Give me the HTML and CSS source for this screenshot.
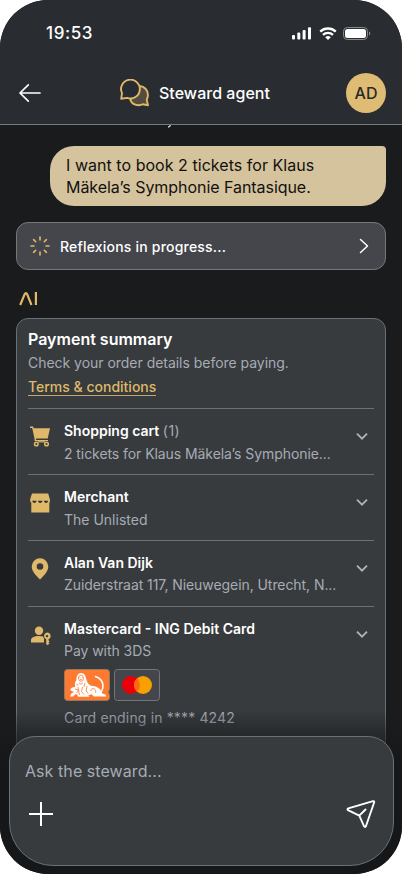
FILE: index.html
```html
<!DOCTYPE html>
<html lang="en">
<head>
<meta charset="utf-8">
<meta name="viewport" content="width=device-width, initial-scale=1">
<title>Steward agent</title>
<link rel="stylesheet" href="styles.css">
</head>
<body>
<div class="phone">
  <header class="top">
    <div class="status">
      <span class="time">19:53</span>
      <div class="signals">
        <svg width="20" height="13" viewBox="0 0 20 13" fill="#fff"><rect x="0" y="8" width="3" height="4.5" rx="1"/><rect x="5.3" y="5.6" width="3" height="6.900" rx="1"/><rect x="10.600" y="3" width="3" height="9.500" rx="1"/><rect x="16" y=".3" width="3" height="12.200" rx="1"/></svg>
        <svg class="wifi" width="18" height="13" viewBox="0 0 18 13"><g fill="none" stroke="#fff" stroke-width="2.300"><path d="M1.200 4.600a11.300 11.300 0 0 1 15.600 0"/><path d="M4 7.800a7.300 7.300 0 0 1 10 0"/></g><path d="M6.200 10.200a4.200 4.200 0 0 1 5.600 0L9 13z" fill="#fff"/></svg>
        <svg class="battery" width="28" height="13" viewBox="0 0 28 13"><rect x=".5" y=".5" width="24" height="12" rx="3.800" fill="none" stroke="#888b8e"/><rect x="2" y="2" width="21" height="9" rx="2.500" fill="#fff"/><path d="M26 4.500c1.800.7 1.800 3.300 0 4z" fill="#888b8e"/></svg>
      </div>
    </div>
    <div class="nav">
      <svg class="back" width="24" height="24" viewBox="0 0 24 24" fill="none" stroke="#fff" stroke-width="1.700" stroke-linecap="round" stroke-linejoin="round"><path d="M22 12H2M10.300 3.800 2 12l8.300 8.200"/></svg>
      <div class="heading">
        <svg width="30" height="28" viewBox="0 0 30 28" stroke="#dfb969" stroke-width="1.900" stroke-linejoin="round"><path d="M19 7c5 .1 8.900 3.700 8.900 8.900 0 1.900-.5 3.400-1.200 4.700l1.300 5.600-5.200-.9c-1 .6-2.400.9-4 .9-4 0-7.200-2-8.500-5.300z" fill="#534d3f"/><path d="M1.200 19.800 2 14.200a9.400 9.400 0 1 1 5.200 4.700z" fill="#292c31"/></svg>
        <h1>Steward agent</h1>
      </div>
      <div class="avatar">AD</div>
    </div>
  </header>

  <main class="chat">
    <div class="earlier"><svg width="5" height="3" viewBox="0 0 5 3"><path d="M3.500 0Q3 2 1 2" fill="none" stroke="#d5d6d7" stroke-width="1.300"/></svg></div>
    <div class="bubble"><span class="l1">I want to book 2 tickets for Klaus</span><br><span class="l2">Mäkela’s Symphonie Fantasique.</span></div>
    <div class="progress">
      <svg width="20" height="20" viewBox="0 0 20 20" stroke="#dfb969" stroke-width="1.600" stroke-linecap="round"><path d="M10 1v3M10 16v3M1 10h3M16 10h3M3.600 3.600l2.100 2.100M14.300 14.300l2.100 2.100M16.400 3.600l-2.100 2.100M5.700 14.300l-2.100 2.100"/></svg>
      <span>Reflexions in progress...</span>
      <svg class="next" width="10" height="16" viewBox="0 0 10 16" fill="none" stroke="#fff" stroke-width="1.500" stroke-linecap="round" stroke-linejoin="round"><path d="m1.500 1.500 7 6.500-7 6.500"/></svg>
    </div>
    <svg class="mark" width="20" height="14" viewBox="0 0 20 14" fill="none" stroke="#dfb969" stroke-width="2.200" stroke-linejoin="round"><path d="M1.200 13 5.600 2.300Q6.900-.1 8.200 2.300L12.500 13M16.900 0v13"/></svg>
    <section class="card">
      <h2>Payment summary</h2>
      <p class="hint">Check your order details before paying.</p>
      <p class="terms"><a>Terms &amp; conditions</a></p>

      <div class="row">
        <svg class="icon cart" width="24" height="24" viewBox="0 0 24 24" fill="#dfb969"><path d="M2 2.600h3.100l.7 1.700H22l-2.300 10.200H8.300L7.900 16H20v1H6.600V15L4.200 4H2z"/><g fill="none" stroke="#dfb969" stroke-width="1.500"><circle cx="8.300" cy="20" r="1.800"/><circle cx="18.500" cy="20" r="1.800"/></g><path d="M10 17.200h7v1.200h-7z"/></svg>
        <div class="info"><h3>Shopping cart <span>(1)</span></h3><p class="s1">2 tickets for Klaus Mäkela’s Symphonie...</p></div>
        <svg class="chev" width="14" height="9" viewBox="0 0 14 9"><path d="m2 1.700 5 5 5-5"/></svg>
      </div>
      <div class="row">
        <svg class="icon" width="24" height="24" viewBox="0 0 24 24" fill="#dfb969"><path d="M4 2.500h16.200l1.500 5.200q.9 2.700-.4 4V21.500H3.300v-9.700q-1.700-1.500-.9-4.300z"/><path d="M4 9.800h4.600l-.5 1.200q-.6 1-1.700 1T4.700 11zM9.900 9.800h4.600L14 11q-.6 1-1.800 1t-1.800-1zM15.800 9.800h4.600l-.7 1.200q-.6 1-1.700 1t-1.700-1z" fill="#33383a"/></svg>
        <div class="info"><h3>Merchant</h3><p class="s2">The Unlisted</p></div>
        <svg class="chev" width="14" height="9" viewBox="0 0 14 9"><path d="m2 1.700 5 5 5-5"/></svg>
      </div>
      <div class="row">
        <svg class="icon" width="24" height="24" viewBox="0 0 24 24"><path fill="#dfb969" fill-rule="evenodd" d="M12 1.200a8.300 8.300 0 0 0-8.300 8.300c0 5.400 5 9.500 8.300 13 3.300-3.500 8.300-7.600 8.300-13A8.300 8.300 0 0 0 12 1.200zm0 5a3.300 3.300 0 1 1 0 6.600 3.300 3.300 0 0 1 0-6.600z"/></svg>
        <div class="info"><h3>Alan Van Dijk</h3><p class="s3">Zuiderstraat 117, Nieuwegein, Utrecht, N...</p></div>
        <svg class="chev" width="14" height="9" viewBox="0 0 14 9"><path d="m2 1.700 5 5 5-5"/></svg>
      </div>
      <div class="row last">
        <svg class="icon" width="24" height="24" viewBox="0 0 24 24" fill="#dfb969"><circle cx="11" cy="7.700" r="4.200"/><path d="M3 19.500v-2.700c0-2.400 4-3.800 8-3.800 1.500 0 3 .2 4.200.6l.8 2.200v3.700z"/><path fill-rule="evenodd" d="M19 9.500a3.500 3.500 0 0 1 1.500 6.700v1l1 1-1 1.200 1 1.200-2 1.700-1.300-1.400v-4.700A3.500 3.500 0 0 1 19 9.500zm0 2.400a1.200 1.200 0 1 0 0 2.400 1.200 1.200 0 0 0 0-2.400z"/></svg>
        <div class="info">
          <h3>Mastercard - ING Debit Card</h3><p class="s4">Pay with 3DS</p>
          <div class="brands">
            <svg width="46" height="32" viewBox="0 0 46 32"><rect x=".5" y=".5" width="45" height="31" rx="3" fill="#ff7a31" stroke="#95785f"/><g fill="#fff"><path d="M12.500 8.500q1-4.600 4.700-4.600 4.200.2 4.700 5.200l1.800 5 2.600 2.500 5.200.8q5.600 2.200 6.800 7l3.200 1.200.8 2H30l-2.500-2.300-3.200 1 1 1.500H14l-1-2.600-2 .3-2 2H6l1.500-3.300 2.500-1-2.300-1.200-1.600-1 1.500-2.200 3.600-1-.4-3.500 1.500-3z"/></g><path d="M31.500 7.500q6.700 2.300 7.400 8.200.3 5.800-3.400 9" fill="none" stroke="#fff" stroke-width="1.500" stroke-linecap="round"/><path d="M14.400 9q.3-2.800 2.600-2.900 2.400.1 2.500 3.100-.3 3.200-2.500 3.200-2.300-.2-2.600-3.400M12.300 15l2.200 1.200M15 14l2 1.300 2-1.500M18.500 18l-1 4.500 2.500 3M23 17l-.8 5 2 2.500M26.500 22q.8-3 3.500-2.500 2.600 1 1.700 4.500M11 20l3.500 1-2 3M14 18l1.500 8M21 14l-1.200 4" fill="none" stroke="#ff7a31" stroke-width=".8"/><path d="M15.700 8.700h.8M17.700 8.700h.8M16 10.700h2" stroke="#ff7a31" stroke-width=".8"/><path d="M46 20q-3 3-.2 6z" fill="#505356"/></svg>
            <svg width="46" height="32" viewBox="0 0 46 32"><rect x=".5" y=".5" width="45" height="31" rx="3" fill="#45464c" stroke="#73777b"/><circle cx="17" cy="16" r="9" fill="#eb0009"/><circle cx="29" cy="16" r="9" fill="#f8a000"/><path d="M23 9.300a9 9 0 0 1 0 13.400 9 9 0 0 1 0-13.400z" fill="#ff6812"/></svg>
          </div>
          <p class="s5">Card ending in **** 4242</p>
        </div>
        <svg class="chev" width="14" height="9" viewBox="0 0 14 9"><path d="m2 1.700 5 5 5-5"/></svg>
      </div>
    </section>
  </main>

  <div class="dock">
    <div class="composer">
      <div class="ask">Ask the steward...</div>
      <div class="actions">
        <svg width="24" height="24" viewBox="0 0 24 24" stroke="#fff" stroke-width="2"><path d="M0 12h24M12 0v24"/></svg>
        <svg width="30" height="30" viewBox="0 0 30 30" fill="none" stroke="#fff" stroke-width="1.900" stroke-linecap="round" stroke-linejoin="round"><path d="M27 2.200 2.300 9.400q-1.500.8-.3 1.800l11.300 5.500L18 27.200q1.200 1.600 2-.2L28.200 3.200q.1-1.300-1.200-1zM13.300 16.700l6.200-6.200"/></svg>
      </div>
    </div>
  </div>
</div>
</body>
</html>
```
FILE: styles.css
```css
* { box-sizing: border-box; }
body { margin: 0; background: #fff; font-family: Inter, "Liberation Sans", sans-serif; color: #fff; }
h1, h2, h3, p { margin: 0; white-space: nowrap; }
svg { display: block; flex: none; }

.phone { position: relative; width: 402px; height: 874px; border-radius: 48px; overflow: hidden; display: flex; flex-direction: column; background: #191b1c; }

.top { height: 125px; flex: none; background: #292c31; border-bottom: 1px solid #75797c; display: flex; flex-direction: column; }
.status { height: 66px; padding: 0 31px 0 46px; display: flex; align-items: center; justify-content: space-between; }
.time { font-size: 17px; font-weight: 500; line-height: 22px; letter-spacing: .6px; }
.signals { display: flex; align-items: center; }
.wifi { margin-left: 7px; }
.battery { margin-left: 6px; }
.nav { height: 54px; padding: 0 16px 0 18px; display: flex; align-items: center; }
.heading { display: flex; align-items: center; gap: 9px; margin: 0 auto 0 78px; }
h1 { font-size: 16px; font-weight: 500; line-height: 24px; letter-spacing: .03px; }
.avatar { width: 40px; height: 40px; border-radius: 50%; background: #dfbc74; color: #292a27; display: flex; align-items: center; justify-content: center; font-size: 16px; font-weight: 500; }

.chat { flex: 1; min-height: 0; overflow: hidden; padding: 0 16px; display: flex; flex-direction: column; }
.earlier { height: 3px; margin: 0 0 18px 151px; flex: none; }
.bubble { flex: none; margin-left: 34px; height: 60px; padding: 8px 16px; border-radius: 24px 4px 24px 24px; background: #d5c39d; color: #11110f; font-size: 16px; line-height: 22px; white-space: nowrap; }
.l1 { letter-spacing: .04px; }
.l2 { letter-spacing: -.05px; }
.progress { flex: none; height: 48px; margin-top: 16px; padding: 0 16px 0 13px; display: flex; align-items: center; gap: 10px; border: 1px solid #75777b; border-radius: 12px; background: #45464c; font-size: 14px; font-weight: 500; letter-spacing: .2px; }
.next { margin-left: auto; }
.mark { margin: 22px 0 12px 3px; }

.card { flex: none; height: 440px; padding: 8px 11px; border: 1px solid #68717a; border-radius: 12px; background: #373b3e; }
h2 { font-size: 16px; font-weight: 600; line-height: 24px; }
.hint, .terms { font-size: 14px; line-height: 24px; color: #a7abb4; }
.hint { letter-spacing: -.03px; }
.terms { margin-bottom: 9px; }
.terms a { color: #dfb969; font-weight: 500; border-bottom: 1px solid #c5a765; }
.row { height: 66px; border-top: 1px solid #68717a; padding: 11px 5px 0 0; display: flex; align-items: flex-start; }
.row.last { height: auto; }
.icon { margin: 5px 12px 0 0; }
.icon.cart { margin-top: 4px; }
.info { flex: 1; min-width: 0; }
h3 { font-size: 14px; font-weight: 600; line-height: 22px; }
h3 span { font-weight: 400; color: #a7abb4; letter-spacing: .5px; }
.info p { margin-top: 1px; font-size: 14px; line-height: 22px; color: #a7abb4; }
.info .s1 { letter-spacing: -.07px; }
.info .s3 { margin-top: 0; letter-spacing: -.07px; }
.info .s4 { margin-top: 0; letter-spacing: -.05px; }
.chev { margin-top: 12px; fill: none; stroke: #afb3bb; stroke-width: 1.800; }
.brands { display: flex; gap: 4px; margin-top: 7px; }
.info .s5 { margin-top: 6px; letter-spacing: .15px; }

.dock { position: absolute; left: 0; right: 0; bottom: 0; padding: 26px 8px 8px 9px; background: linear-gradient(to bottom, rgba(24,25,26,0), rgba(24,25,26,.55) 26px, #161718 60px); }
.composer { height: 130px; border: 1px solid #68717a; border-radius: 26px 26px 44px 44px; background: #373b3e; padding: 22px 17px 0 15px; }
.ask { color: #a7abb4; font-size: 16px; line-height: 24px; letter-spacing: .07px; }
.actions { margin-top: 16px; padding-left: 4px; display: flex; align-items: center; justify-content: space-between; }
```
